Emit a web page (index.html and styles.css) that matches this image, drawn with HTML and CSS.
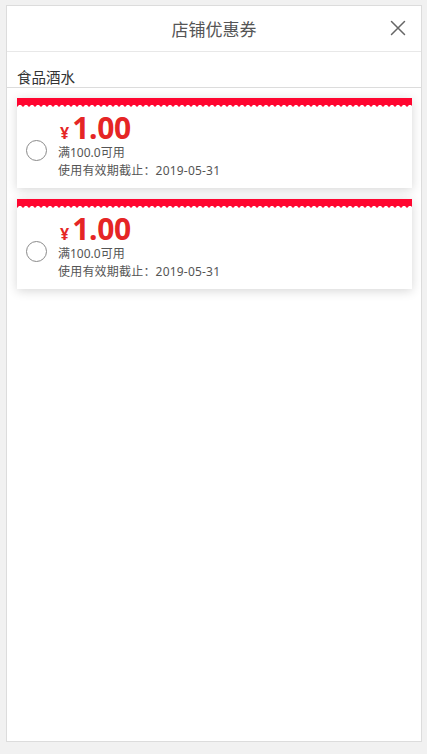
FILE: index.html
```html
<!DOCTYPE html>
<html lang="zh">
<head>
<meta charset="utf-8">
<title>店铺优惠券</title>
<link rel="stylesheet" href="styles.css">
</head>
<body>
<div class="panel">
  <div class="header">
    <span class="title">店铺优惠券</span>
    <svg class="close" width="16" height="16" viewBox="0 0 16 16"><path d="M1.5 1.5 L14.5 14.5 M14.5 1.5 L1.5 14.5" stroke="#666" stroke-width="1.5" fill="none" stroke-linecap="round"/></svg>
  </div>
  <div class="section">食品酒水</div>
  <div class="list">
    <div class="card">
      <div class="band"></div>
      <div class="body">
        <span class="radio"></span>
        <div class="info">
          <div class="price"><span class="yen">¥</span><span class="amount">1.00</span></div>
          <div class="line">满100.0可用</div>
          <div class="line date">使用有效期截止：2019-05-31</div>
        </div>
      </div>
    </div>
    <div class="card">
      <div class="band"></div>
      <div class="body">
        <span class="radio"></span>
        <div class="info">
          <div class="price"><span class="yen">¥</span><span class="amount">1.00</span></div>
          <div class="line">满100.0可用</div>
          <div class="line date">使用有效期截止：2019-05-31</div>
        </div>
      </div>
    </div>
  </div>
</div>
</body>
</html>
```

FILE: styles.css
```css
html, body {
  margin: 0;
  padding: 0;
  background: #f1f1f1;
  font-family: "Noto Sans", "Noto Sans CJK SC", sans-serif;
}
body {
  padding: 5px 5px 0 6px;
  height: 754px;
  box-sizing: border-box;
}
.panel {
  background: #fff;
  border: 1px solid #dcdcdc;
  height: 737px;
  box-sizing: border-box;
  display: flex;
  flex-direction: column;
}
.header {
  position: relative;
  height: 45px;
  border-bottom: 1px solid #e8e8e8;
  display: flex;
  align-items: center;
  justify-content: center;
}
.title {
  font-size: 17px;
  line-height: 24px;
  color: #555;
  font-family: "Noto Sans CJK SC", sans-serif;
}
.close {
  position: absolute;
  right: 15px;
  top: 14px;
}
.section {
  font-family: "Noto Sans CJK SC", sans-serif;
  font-size: 14.5px;
  color: #333;
  padding: 14px 10px 0;
  height: 21px;
  line-height: 21px;
  border-bottom: 1px solid #dcdcdc;
}
.list {
  padding: 10px 9px 0 10px;
  display: flex;
  flex-direction: column;
  gap: 11px;
}
.card {
  background: #fff;
  box-shadow: 0 2px 10px rgba(0,0,0,0.16);
}
.band {
  height: 10px;
  background: radial-gradient(circle at 3px 10px, #fff 2.6px, transparent 3.2px) repeat-x 0 0 / 6px 10px, #ff0630;
}
.body {
  display: flex;
  padding: 4px 10px 8px 9px;
  gap: 11px;
}
.radio {
  width: 19px;
  height: 19px;
  border: 1px solid #8a8a8a;
  border-radius: 50%;
  margin-top: 28px;
  flex: none;
}
.price {
  color: #e52525;
  height: 32px;
  line-height: 32px;
  font-weight: 700;
  padding-left: 2px;
}
.yen {
  font-size: 16px;
  margin-right: 3px;
}
.amount {
  font-size: 30px;
  letter-spacing: -0.3px;
}
.line {
  font-size: 12px;
  color: #555;
  line-height: 18px;
}
.date {
  letter-spacing: 0.2px;
}
```
